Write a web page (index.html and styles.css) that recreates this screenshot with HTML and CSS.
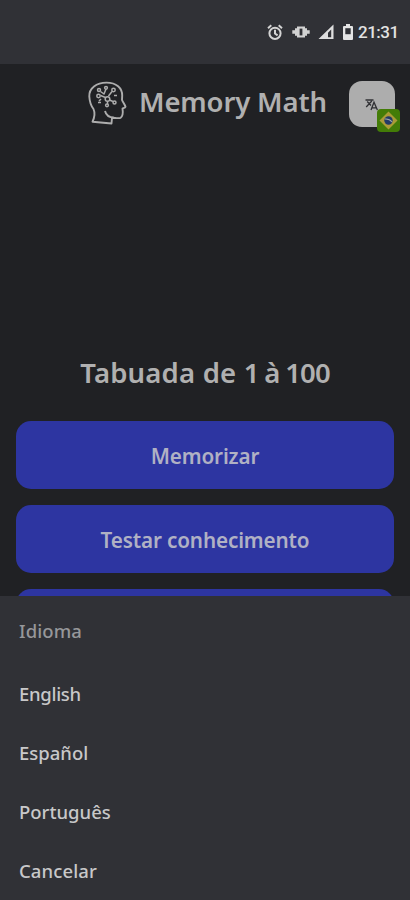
FILE: index.html
```html
<!DOCTYPE html>
<html lang="pt-BR">
<head>
<meta charset="utf-8">
<title>Memory Math</title>
<link rel="stylesheet" href="styles.css">
</head>
<body>
<div class="phone">
  <div class="status">
    <svg class="alarm" width="16" height="17" viewBox="0 0 16 17" fill="none" stroke="#d4d4d4" stroke-width="2"><circle cx="8" cy="9.3" r="5.6"/><path d="M8 5.8v3.8l2.6 1.8M1 4.2l3.3-2.9M15 4.2l-3.3-2.9"/></svg>
    <svg class="vibrate" width="18" height="16" viewBox="0 0 18 16" fill="#d2d2d2"><path d="M5 2.5h8v1.7h2v2h2.7v3.6H15v2h-2v1.7H5v-1.7H3v-2H.3V6.200H3v-2h2z"/><path d="M7.600 4.600h2.800v6.800H7.600z" fill="#303136"/></svg>
    <svg class="signal" width="16" height="16" viewBox="0 0 16 16" fill="#dedede"><path fill-rule="evenodd" d="M.5 15 15.5.5V15zM10 13.3h3.2V5.600L10 8.8z"/></svg>
    <svg class="battery" width="10" height="16" viewBox="0 0 10 16"><path d="M3 0h4v2h2q1 0 1 1v12q0 1-1 1H1q-1 0-1-1V3q0-1 1-1h2z" fill="#e4e4e4"/><path d="M2.300 4.200h5.400v6H2.300z" fill="#303136"/></svg>
    <span class="time">21:31</span>
  </div>
  <div class="header">
    <svg class="head" width="40" height="45" viewBox="0 0 40 45" fill="none" stroke="#adadad" stroke-width="1.9" stroke-linejoin="round">
      <path d="M5.500 40.700C7.500 36.500 8 31.500 6.500 28C4.500 25.500 2.600 20.500 2.300 15.500C1.800 7.200 9.500 1.600 19.500 1.600C29.500 1.600 35.200 7.200 35.200 14.500L35 19C36 21.500 38 23.700 38.500 25.700C38.200 27 36.200 27 35.500 27.500C36 31 36 35.500 33.500 36.800C31 37.800 27.500 36.600 25 36.800L24.500 42.500Z"/>
      <path d="M27 36.800C22 36.500 19 34 18 30"/>
      <g stroke-width="1.5"><circle cx="12" cy="9" r="1.500"/><circle cx="19" cy="6.800" r="1.400"/><circle cx="26.500" cy="9" r="1.700"/><circle cx="11.500" cy="15" r="1.700"/><circle cx="20.500" cy="18" r="2.300"/><circle cx="27.500" cy="21.500" r="1.500"/><circle cx="20" cy="24.300" r="1.400"/><path d="m13.500 10.500 3.500 2.500 2-5M13.500 14.500l5 2M25 10.500l-3.500 4.500M22.500 19l3.500 1.500M20.500 20v3M27 14.500h3M11 21.500h3M14 18l-2 2"/></g>
    </svg>
    <h1 class="brand">Memory Math</h1>
    <div class="lang">
      <svg class="translate" width="14" height="13" viewBox="0 0 14 13" fill="none" stroke="#303034" stroke-width="1.300"><path d="M.5 2h8M1.200 9 6.800 3M2.200 3.500 6 7.500M6 12 9 4.200l3.400 7.800M7 9.800h4.500"/></svg>
      <svg class="flag" width="23" height="23" viewBox="0 0 23 23"><rect width="23" height="23" rx="4" fill="#437c07"/><path d="M11.500 2.500 20.500 11.500l-9 9-9-9z" fill="#aa9b38"/><circle cx="11.500" cy="11.500" r="4.200" fill="#233a67"/><path d="M7.800 10q4.500-.5 7.300 3" fill="none" stroke="#a0a8a9" stroke-width="1.100"/></svg>
    </div>
  </div>
  <div class="content">
    <h2 class="title">Tabuada de <span class="range">1 à 100</span></h2>
    <div class="button">Memorizar</div>
    <div class="button">Testar conhecimento</div>
    <div class="button"></div>
  </div>
  <div class="sheet">
    <div class="row label">Idioma</div>
    <div class="row english">English</div>
    <div class="row">Español</div>
    <div class="row">Português</div>
    <div class="row cancel">Cancelar</div>
  </div>
</div>
</body>
</html>
```
FILE: styles.css
```css
* { box-sizing: border-box; }
body { margin: 0; background: #202124; font-family: "Noto Sans", sans-serif; }
.phone { width: 410px; height: 900px; overflow: hidden; display: flex; flex-direction: column; background: #202124; }
.status { flex: none; height: 64px; background: #303136; display: flex; align-items: center; padding-left: 267px; }
.status svg { flex: none; }
.vibrate { margin-left: 9px; }
.signal { margin-left: 8px; }
.battery { margin-left: 9px; }
.time { margin-left: 5px; font: 500 17px/20px Roboto, sans-serif; color: #e2e2e2; letter-spacing: -0.5px; white-space: nowrap; }
.header { flex: none; height: 80px; display: flex; align-items: flex-start; padding: 17px 0 0 87px; }
.head { flex: none; }
.brand { margin: 1px 0 0 12px; width: 210px; font-size: 27.5px; line-height: 40px; font-weight: 600; letter-spacing: -0.15px; color: #b0b0b0; white-space: nowrap; }
.lang { position: relative; flex: none; width: 46px; height: 46px; border-radius: 13px; background: #adadad; display: flex; align-items: center; justify-content: center; }
.flag { position: absolute; left: 28px; top: 28px; }
.content { flex: none; height: 452px; overflow: hidden; padding: 209px 16px 0; display: flex; flex-direction: column; gap: 16px; }
.title { margin: 0 0 12px; height: 40px; font-size: 27.5px; line-height: 40px; font-weight: 600; letter-spacing: 0.2px; color: #b0b0b0; text-align: center; white-space: nowrap; }
.range { letter-spacing: -0.9px; word-spacing: -0.5px; }
.button { flex: none; height: 68px; border-radius: 15px; background: #2d35a1; color: #b0b1c4; font-size: 20.7px; line-height: 30px; font-weight: 600; letter-spacing: -0.15px; padding-top: 1px; display: flex; align-items: center; justify-content: center; white-space: nowrap; }
.sheet { flex: 1; background: #303136; color: #c8c8c9; font-size: 18.5px; font-weight: 500; padding: 5px 19px 0; }
.row { height: 59.2px; display: flex; align-items: center; line-height: 26px; }
.label { height: 63px; padding-bottom: 4px; color: #96979a; letter-spacing: 0.1px; }
.english { letter-spacing: -0.3px; }
.cancel { letter-spacing: 0.1px; }
```
